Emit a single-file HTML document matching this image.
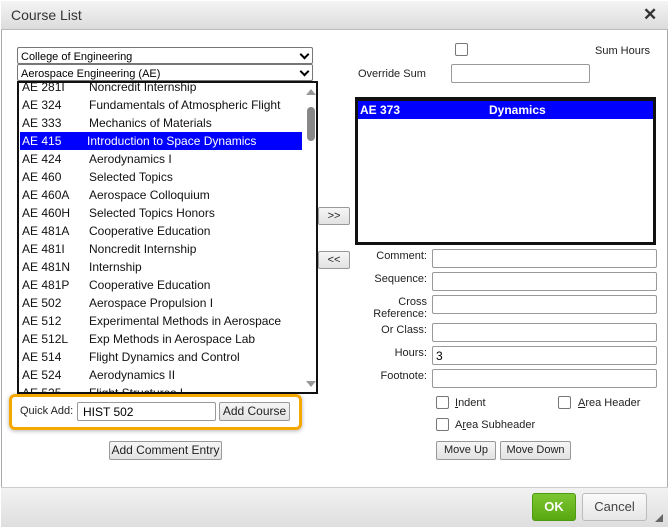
<!DOCTYPE html>
<html><head><style>
*{box-sizing:border-box;margin:0;padding:0}
body{width:670px;height:530px;background:#fff;font-family:"Liberation Sans",Arial,sans-serif;position:relative;overflow:hidden}
.a{position:absolute}
.dlg{left:1px;top:1px;width:667px;height:526px;border:1px solid #aaa;background:#fff}
.title{left:1px;top:1px;width:667px;height:29px;background:linear-gradient(#f4f4f4,#dcdcdc);border-bottom:1px solid #bbb;font-size:14px;color:#333;padding:6px 10px}
.foot{left:1px;top:487px;width:667px;height:40px;background:linear-gradient(#f2f2f2,#dedede);border-top:1px solid #ccc}
.sel{border:1px solid #777;border-radius:2px;font-size:11px;padding:2px 3px 0;height:17px;background:#fff;width:296px;left:17px;line-height:14px}
.sel:after{content:"";position:absolute;right:4px;top:3px;width:5px;height:5px;border-right:2px solid #000;border-bottom:2px solid #000;transform:rotate(45deg)}
.list{left:17px;top:81px;width:301px;height:313px;border:2px solid #111;overflow:hidden;font-size:12px}
.row{position:absolute;left:3px;height:18px;width:280px;line-height:18px;color:#111}
.row span{position:absolute;left:67px;white-space:nowrap}
.row.s{background:#0000ff;color:#fff;left:1px;width:282px;padding-left:2px}
.row.s span{left:67px}
.in{border:1px solid #999;border-radius:2px;background:#fff;height:19px;font-size:12px;padding:2px 3px}
.btn{border:1px solid #999;border-radius:2px;background:linear-gradient(#f6f6f6,#e2e2e2);font-size:11px;text-align:center;line-height:17px;color:#222}
.lbl{font-size:11px;color:#222;text-align:right;width:80px;left:347px}
.cb{width:13px;height:13px;border:1px solid #777;border-radius:2px;background:#fff}
.t{font-size:11px;color:#222}
</style></head><body>
<div class="a dlg"></div>
<div class="a title">Course List</div>
<div class="a" style="left:643px;top:5px;font-size:17px;font-weight:bold;color:#333">✕</div>
<div class="a sel" style="top:47px">College of Engineering</div>
<div class="a sel" style="top:64px">Aerospace Engineering (AE)</div>
<div class="a list">
<div class="row" style="top:-5px">AE 281I<span>Noncredit Internship</span></div>
<div class="row" style="top:13px">AE 324<span>Fundamentals of Atmospheric Flight</span></div>
<div class="row" style="top:31px">AE 333<span>Mechanics of Materials</span></div>
<div class="row s" style="top:49px">AE 415<span>Introduction to Space Dynamics</span></div>
<div class="row" style="top:67px">AE 424<span>Aerodynamics I</span></div>
<div class="row" style="top:85px">AE 460<span>Selected Topics</span></div>
<div class="row" style="top:103px">AE 460A<span>Aerospace Colloquium</span></div>
<div class="row" style="top:121px">AE 460H<span>Selected Topics Honors</span></div>
<div class="row" style="top:139px">AE 481A<span>Cooperative Education</span></div>
<div class="row" style="top:157px">AE 481I<span>Noncredit Internship</span></div>
<div class="row" style="top:175px">AE 481N<span>Internship</span></div>
<div class="row" style="top:193px">AE 481P<span>Cooperative Education</span></div>
<div class="row" style="top:211px">AE 502<span>Aerospace Propulsion I</span></div>
<div class="row" style="top:229px">AE 512<span>Experimental Methods in Aerospace</span></div>
<div class="row" style="top:247px">AE 512L<span>Exp Methods in Aerospace Lab</span></div>
<div class="row" style="top:265px">AE 514<span>Flight Dynamics and Control</span></div>
<div class="row" style="top:283px">AE 524<span>Aerodynamics II</span></div>
<div class="row" style="top:301px">AE 525<span>Flight Structures I</span></div>
<div class="a" style="left:285px;top:0;width:14px;height:309px;background:#fff"></div>
<div class="a" style="left:287px;top:6px;width:0;height:0;border-left:5px solid transparent;border-right:5px solid transparent;border-bottom:6px solid #999"></div>
<div class="a" style="left:288px;top:24px;width:8px;height:34px;border-radius:4px;background:#888"></div>
<div class="a" style="left:287px;top:298px;width:0;height:0;border-left:5px solid transparent;border-right:5px solid transparent;border-top:6px solid #999"></div>
</div>
<div class="a" style="left:9px;top:394px;width:293px;height:36px;border:3px solid #f5a800;border-radius:6px;box-shadow:0 1px 4px rgba(0,0,0,.3);background:#fff"></div>
<div class="a t" style="left:20px;top:405px">Quick Add:</div>
<div class="a in" style="left:77px;top:402px;width:139px;height:19px;padding-left:5px">HIST 502</div>
<div class="a btn" style="left:219px;top:402px;width:71px;height:19px;font-size:12px">Add Course</div>
<div class="a btn" style="left:109px;top:441px;width:113px;height:19px;font-size:12px">Add Comment Entry</div>
<div class="a btn" style="left:318px;top:207px;width:32px;height:18px">&gt;&gt;</div>
<div class="a btn" style="left:318px;top:251px;width:32px;height:18px">&lt;&lt;</div>
<div class="a cb" style="left:455px;top:43px"></div>
<div class="a t" style="left:595px;top:45px">Sum Hours</div>
<div class="a t" style="left:358px;top:68px">Override Sum</div>
<div class="a in" style="left:451px;top:64px;width:139px;height:19px"></div>
<div class="a" style="left:355px;top:97px;width:301px;height:148px;border:3px solid #111;border-top-width:4px">
<div class="a" style="left:0;top:0;width:295px;height:18px;background:#0000ff;color:#fff;font-size:12px;font-weight:bold;line-height:18px;padding-left:2px">AE 373<span style="position:absolute;left:131px">Dynamics</span></div>
</div>
<div class="a lbl" style="top:250px">Comment:</div>
<div class="a in" style="left:432px;top:249px;width:225px"></div>
<div class="a lbl" style="top:273px">Sequence:</div>
<div class="a in" style="left:432px;top:272px;width:225px"></div>
<div class="a lbl" style="top:296px;line-height:12px">Cross<br>Reference:</div>
<div class="a in" style="left:432px;top:295px;width:225px"></div>
<div class="a lbl" style="top:324px">Or Class:</div>
<div class="a in" style="left:432px;top:323px;width:225px"></div>
<div class="a lbl" style="top:347px">Hours:</div>
<div class="a in" style="left:432px;top:346px;width:225px">3</div>
<div class="a lbl" style="top:370px">Footnote:</div>
<div class="a in" style="left:432px;top:369px;width:225px"></div>
<div class="a cb" style="left:436px;top:396px"></div>
<div class="a t" style="left:455px;top:397px"><u>I</u>ndent</div>
<div class="a cb" style="left:558px;top:396px"></div>
<div class="a t" style="left:578px;top:397px"><u>A</u>rea Header</div>
<div class="a cb" style="left:436px;top:418px"></div>
<div class="a t" style="left:455px;top:419px">A<u>r</u>ea Subheader</div>
<div class="a btn" style="left:436px;top:441px;width:60px;height:19px">Move Up</div>
<div class="a btn" style="left:500px;top:441px;width:71px;height:19px">Move Down</div>
<div class="a foot"></div>
<div class="a" style="left:532px;top:493px;width:44px;height:28px;border-radius:3px;background:linear-gradient(#7cc631,#58a812);border:1px solid #4e9a10;color:#fff;font-weight:bold;font-size:13px;text-align:center;line-height:26px">OK</div>
<div class="a" style="left:582px;top:493px;width:65px;height:28px;border-radius:3px;background:linear-gradient(#fafafa,#e6e6e6);border:1px solid #bbb;color:#444;font-size:13px;text-align:center;line-height:26px">Cancel</div>
<div class="a" style="left:655px;top:514px;width:0;height:0;border-left:8px solid transparent;border-bottom:8px solid #666"></div>
</body></html>
